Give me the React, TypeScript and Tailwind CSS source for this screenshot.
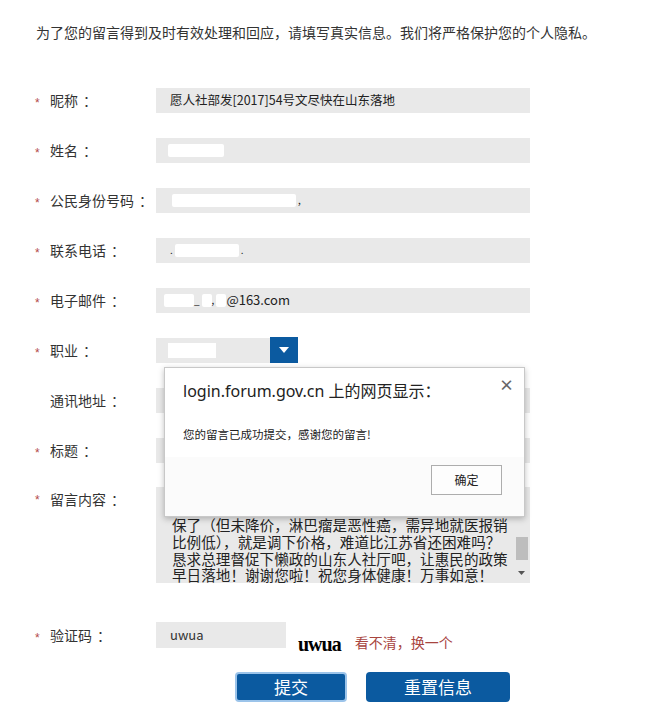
import React from 'react';

const font = { fontFamily: '"Noto Sans CJK SC", "Liberation Sans", sans-serif' };

const Star = ({ show = true }: { show?: boolean }) => (
  <span
    className={`inline-block w-[13px] text-[12px] leading-none mt-[5px] ${show ? 'text-[#b34a4a]' : 'text-transparent'}`}
    style={{ fontFamily: '"Liberation Sans", sans-serif' }}
  >
    *
  </span>
);

const Label = ({ text }: { text: string }) => (
  <span className="pl-[2px]">
    {text}
    <span className="pl-[5px]">：</span>
  </span>
);

const Row = ({ label, star = true, children, labelClass = '' }: { label: string; star?: boolean; children: React.ReactNode; labelClass?: string }) => (
  <div className="flex items-center h-[50px]">
    <div className={`w-[156px] pl-[35px] flex items-center text-[14px] text-[#333] ${labelClass}`}>
      <Star show={star} />
      <Label text={label} />
    </div>
    {children}
  </div>
);

const Field = ({ children }: { children?: React.ReactNode }) => (
  <div className="w-[374px] h-[25px] bg-[#e9e9e9] flex items-center pl-[14px] text-[12.5px] text-[#222]">{children}</div>
);

const Blot = ({ w, ml = 0 }: { w: number; ml?: number }) => (
  <span className="inline-block h-[13px] bg-white rounded-[2px]" style={{ width: w, marginLeft: ml }} />
);

export default function App() {
  return (
    <div className="w-[649px] h-[720px] bg-white relative overflow-hidden" style={font}>
      <p className="pt-[22px] pl-[36px] text-[14px] text-[#333] leading-[20px]">
        为了您的留言得到及时有效处理和回应，请填写真实信息。我们将严格保护您的个人隐私。
      </p>

      <div className="mt-[33px]">
        <Row label="昵称">
          <Field>愿人社部发[2017]54号文尽快在山东落地</Field>
        </Row>
        <Row label="姓名">
          <Field><Blot w={56} ml={-2} /></Field>
        </Row>
        <Row label="公民身份号码">
          <Field><Blot w={124} ml={2} /><span className="text-[10px] leading-none ml-[2px]">,</span></Field>
        </Row>
        <Row label="联系电话">
          <Field>
            <span className="text-[10px] leading-none">.</span>
            <Blot w={64} ml={2} />
            <span className="text-[10px] leading-none ml-[2px]">.</span>
          </Field>
        </Row>
        <Row label="电子邮件">
          <Field>
            <Blot w={30} ml={-6} />
            <span className="text-[10px] leading-none">_</span>
            <Blot w={10} ml={2} />
            <span className="text-[10px] leading-none">,</span>
            <Blot w={10} ml={2} />
            <span className="text-[13px]">@163.com</span>
          </Field>
        </Row>
        <Row label="职业">
          <div className="flex items-center">
            <div className="w-[114px] h-[25px] bg-[#e9e9e9] flex items-center pl-[12px]">
              <span className="w-[48px] h-[15px] bg-white" />
            </div>
            <div className="w-[28px] h-[26px] bg-[#0b5aa0] flex items-center justify-center">
              <svg width="10" height="6" viewBox="0 0 10 6"><path d="M0 0h10L5 6z" fill="#fff" /></svg>
            </div>
          </div>
        </Row>
        <Row label="通讯地址" star={false} labelClass="pl-[35px]">
          <Field />
        </Row>
        <Row label="标题">
          <Field />
        </Row>
        <div className="flex h-[108px] pt-[12px]">
          <div className="w-[156px] pl-[35px] flex items-start pt-[2px] text-[14px] text-[#333]">
            <Star />
            <Label text="留言内容" />
          </div>
          <div className="w-[374px] h-[96px] bg-[#e9e9e9] flex overflow-hidden">
            <div className="flex-1 flex flex-col justify-end pl-[16px] -mb-[1px] text-[14.6px] leading-[16.7px] text-[#222]" style={{ fontFamily: '"Noto Sans CJK SC", sans-serif' }}>
              <div className="whitespace-nowrap">保了（但未降价，淋巴瘤是恶性癌，需异地就医报销</div>
              <div className="whitespace-nowrap">比例低），就是调下价格，难道比江苏省还困难吗？</div>
              <div className="whitespace-nowrap">恳求总理督促下懒政的山东人社厅吧，让惠民的政策</div>
              <div className="whitespace-nowrap">早日落地！谢谢您啦！祝您身体健康！万事如意！</div>
            </div>
            <div className="w-[17px] flex flex-col items-center pt-[50px]">
              <div className="w-[12px] h-[23px] bg-[#bdbdbd]" />
              <svg className="mt-[11px]" width="7" height="4" viewBox="0 0 7 4"><path d="M0 0h7L3.5 4z" fill="#555" /></svg>
            </div>
          </div>
        </div>

        <div className="flex items-center h-[40px] mt-[32px]">
          <div className="w-[156px] pl-[35px] flex items-center text-[14px] text-[#333]">
            <Star />
            <Label text="验证码" />
          </div>
          <div className="w-[130px] h-[26px] bg-[#e9e9e9] flex items-center pl-[14px] text-[13px] text-[#333]">uwua</div>
          <span className="ml-[12px] mt-[18px] text-[20px] font-bold tracking-[-1px] text-black leading-none" style={{ fontFamily: '"Liberation Serif", serif' }}>uwua</span>
          <span className="ml-[14px] mt-[14px] text-[14px] text-[#a8453f]">看不清，换一个</span>
        </div>

        <div className="flex mt-[17px] pl-[235px] gap-[19px]">
          <button className="w-[112px] h-[30px] rounded-[4px] bg-[#0b5aa0] border-2 border-[#9cc4ea] text-white text-[17px]">提交</button>
          <button className="w-[144px] h-[30px] rounded-[4px] bg-[#0b5aa0] text-white text-[17px]">重置信息</button>
        </div>
      </div>

      <div className="absolute left-[164px] top-[367px] w-[361px] h-[150px] bg-white border border-[#c8c8c8] shadow-[0_2px_6px_rgba(0,0,0,0.25)] flex flex-col">
        <div className="h-[45px] flex items-center pl-[18px] pr-[12px] text-[16px] text-[#222] relative">
          <span style={{ fontFamily: '"Noto Sans", "Noto Sans CJK SC", sans-serif' }}>login.forum.gov.cn 上的网页显示：</span>
          <span className="absolute right-[10px] top-[6px] text-[15px] text-[#666] font-bold">×</span>
        </div>
        <div className="h-[44px] flex items-center pl-[18px] text-[11.5px] text-[#222]">您的留言已成功提交，感谢您的留言!</div>
        <div className="flex-1 bg-[#fbfbfb] flex justify-end items-start pt-[8px] pr-[22px]">
          <button className="w-[71px] h-[30px] bg-[#fdfdfd] border border-[#adadad] text-[12px] text-[#222]">确定</button>
        </div>
      </div>
    </div>
  );
}
